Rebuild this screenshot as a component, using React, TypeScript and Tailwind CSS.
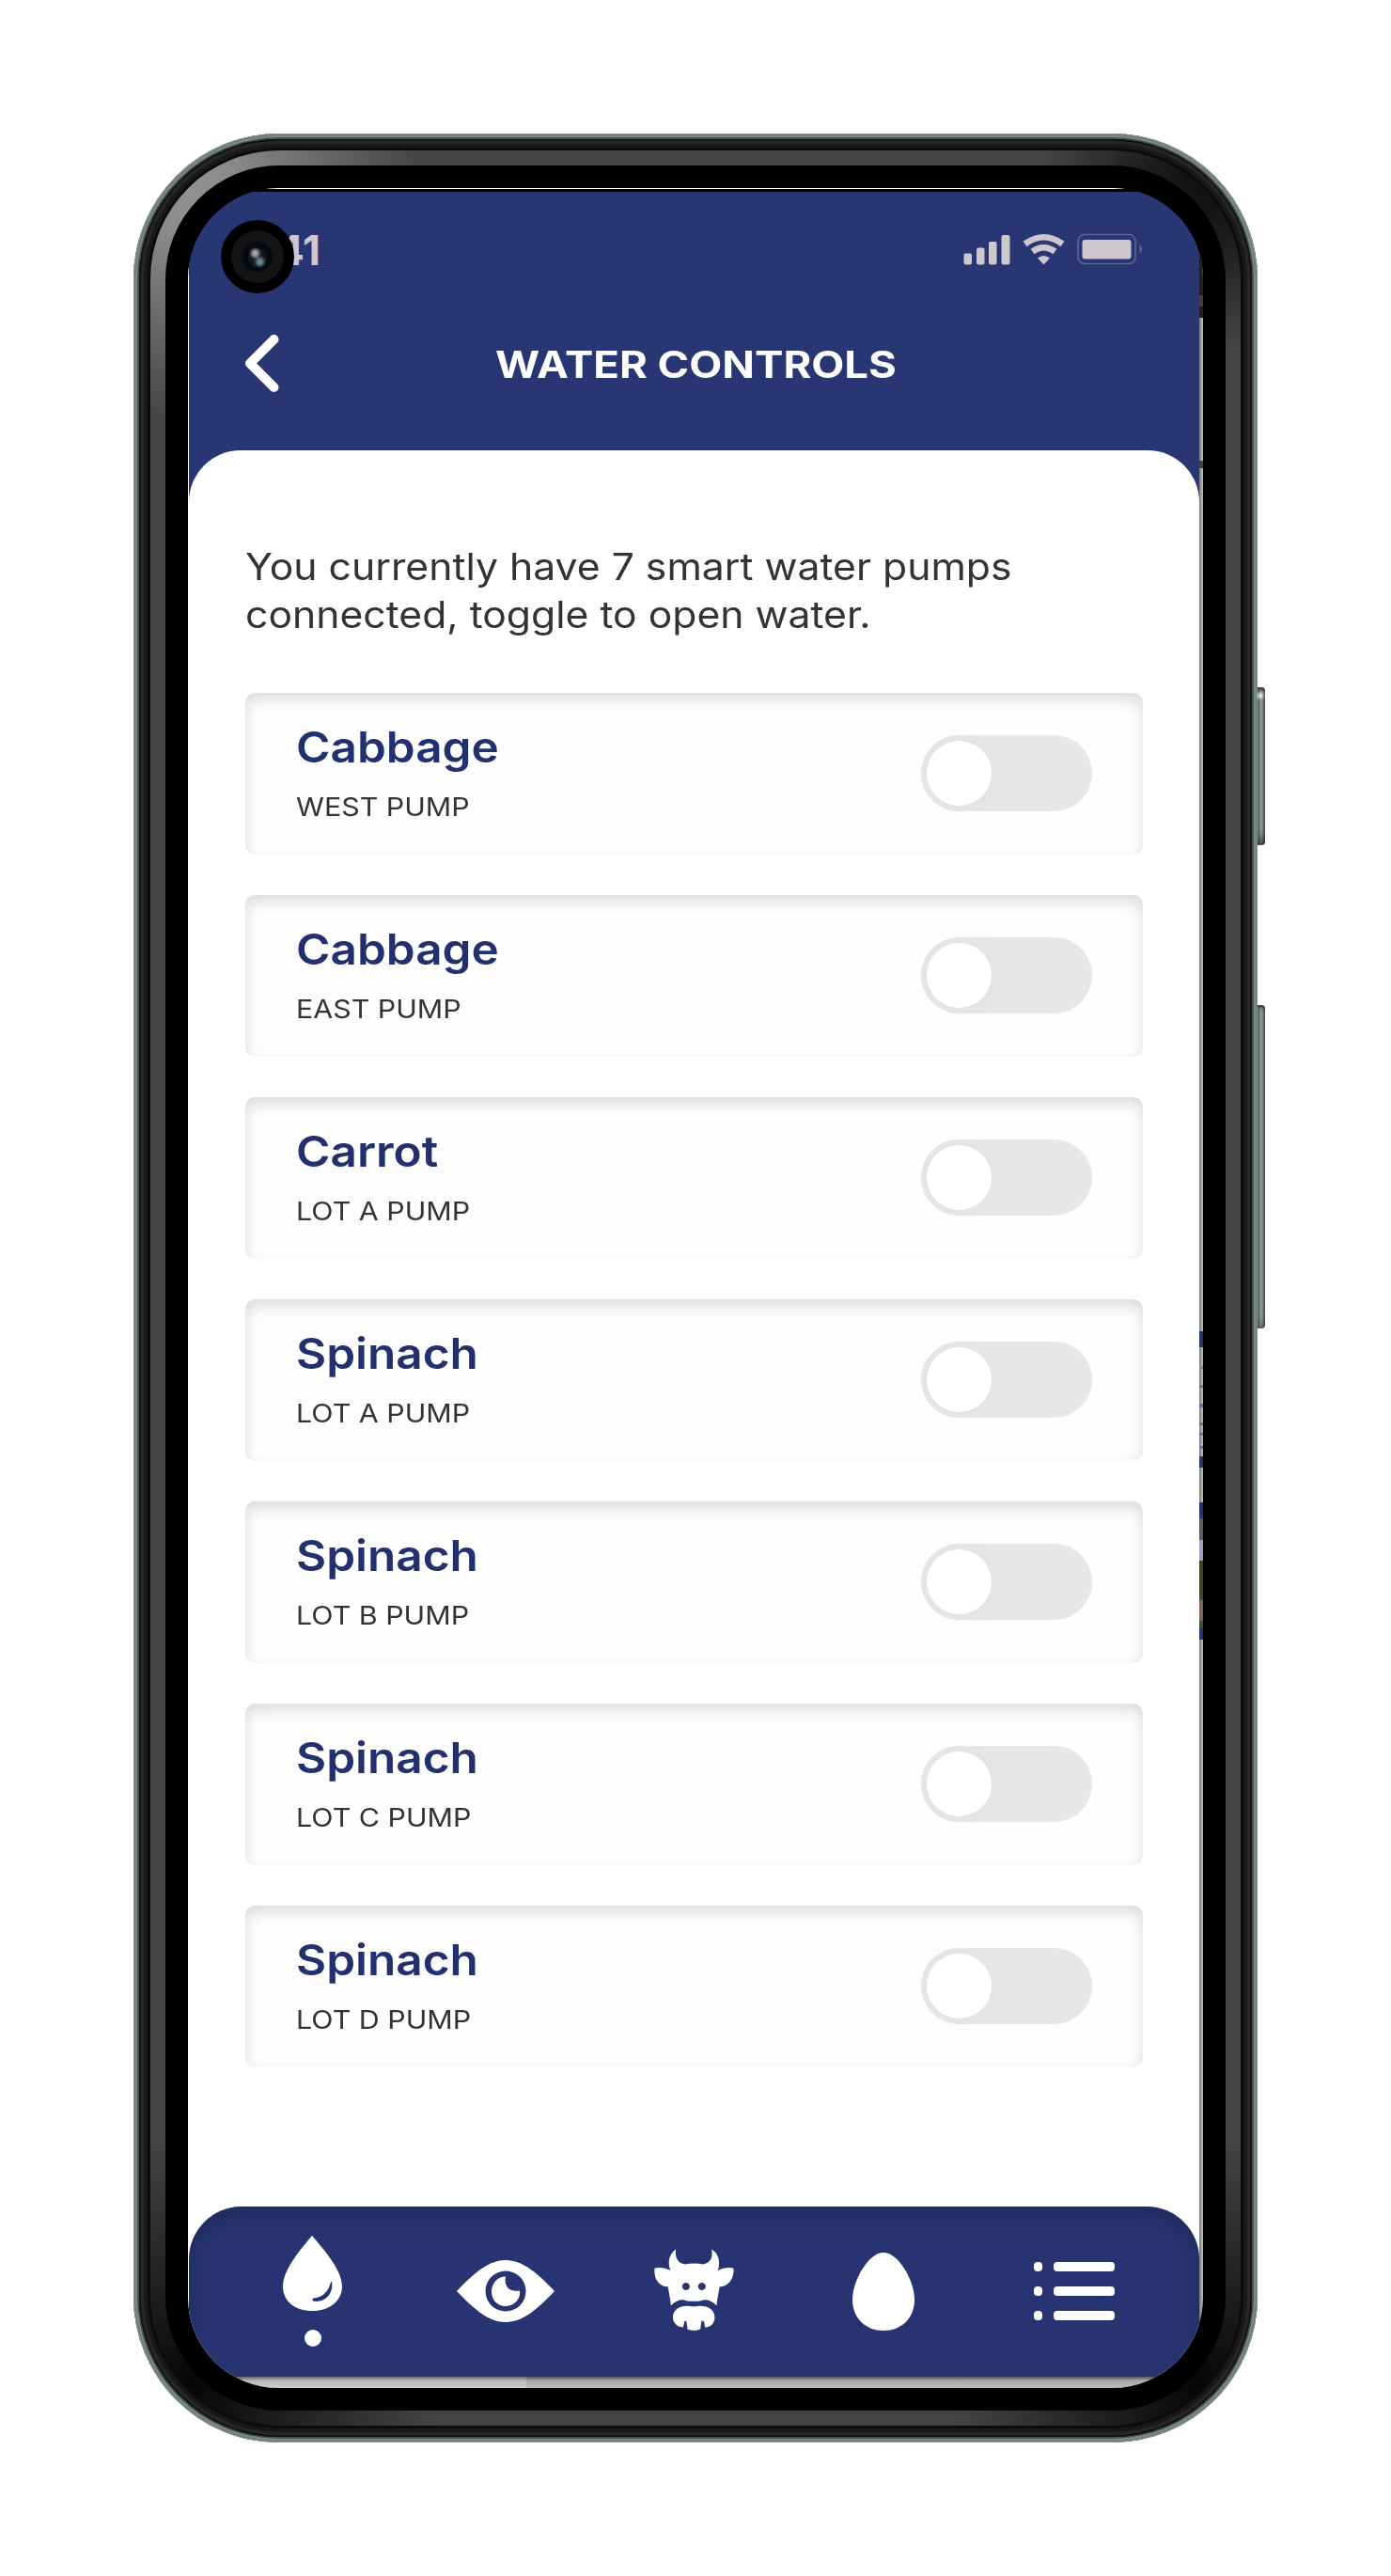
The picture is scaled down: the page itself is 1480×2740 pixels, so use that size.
import { useState } from "react";

const PUMPS = [
  { crop: "Cabbage", pump: "WEST PUMP" },
  { crop: "Cabbage", pump: "EAST PUMP" },
  { crop: "Carrot", pump: "LOT A PUMP" },
  { crop: "Spinach", pump: "LOT A PUMP" },
  { crop: "Spinach", pump: "LOT B PUMP" },
  { crop: "Spinach", pump: "LOT C PUMP" },
  { crop: "Spinach", pump: "LOT D PUMP" },
];

function StatusIcons() {
  return (
    <svg width="194" height="36" viewBox="0 0 194 36" fill="#cdc8d0" className="block">
      <rect x="0.5" y="22.5" width="8.5" height="12" rx="2" />
      <rect x="14" y="16.5" width="8.5" height="18" rx="2" />
      <rect x="27" y="10" width="8.500" height="24.500" rx="2" />
      <rect x="40.500" y="3" width="9" height="31.500" rx="2" />
      <g fill="none" stroke="#cdc8d0" strokeWidth="6.5">
        <path d="M65.500 12.500 Q85.500 -2 105.500 12.500" />
        <path d="M73.500 20.500 Q85.500 12 97.500 20.500" />
      </g>
      <path d="M79 27.500 Q85.500 22.500 92 27.500 L85.500 34.500 Z" />
      <rect x="122" y="2.500" width="61" height="31" rx="7" fill="none" stroke="#5f6695" strokeWidth="1.600" />
      <rect x="126.500" y="8" width="52" height="20.500" rx="3" />
      <path d="M187.500 13 Q190 15 190 18 Q190 21 187.500 23 Z" fill="#5f6695" />
    </svg>
  );
}

function Camera() {
  return (
    <div className="absolute left-[35px] top-[34px] flex size-[78px] items-center justify-center rounded-full bg-black">
      <div className="flex size-14 items-center justify-center rounded-full bg-[#131416]">
        <div className="relative size-8 rounded-full bg-[#08090c]">
          <div className="absolute left-[6px] top-[7px] size-5 rounded-full bg-[#14181d]" />
          <div className="absolute left-[9px] top-[8px] size-[9px] rounded-full bg-[#a2a8ae] blur-[1.5px]" />
          <div className="absolute left-[14px] top-[17px] size-[9px] rounded-full bg-[#6f8591] blur-[1.5px]" />
        </div>
      </div>
    </div>
  );
}

function Toggle({ on, onClick, label }: { on: boolean; onClick: () => void; label: string }) {
  return (
    <button
      type="button"
      role="switch"
      aria-checked={on}
      aria-label={label}
      onClick={onClick}
      className={`flex h-[81px] w-[182px] items-center rounded-full px-1.5 ${on ? "justify-end bg-[#273471]" : "bg-[#e7e7e7]"}`}
    >
      <span className="size-[69px] rounded-full bg-white shadow-[0_0_24px_4px_rgba(0,0,0,0.025)]" />
    </button>
  );
}

function PumpCard({ crop, pump }: { crop: string; pump: string }) {
  const [on, setOn] = useState(false);
  return (
    <div className="flex h-[172px] items-start justify-between rounded-[10px] bg-[#fefefe] pt-[31px] pr-[54px] pl-[54px] shadow-[inset_0_7px_16px_rgba(0,0,0,0.14)]">
      <div>
        <h2 className="origin-left scale-x-[1.1] text-[45px] leading-[54px] font-semibold text-[#22306f]">{crop}</h2>
        <p className="mt-[21px] origin-left scale-x-[1.125] text-[27px] leading-8 whitespace-nowrap text-[#333333]">{pump}</p>
      </div>
      <div className="mt-3.5">
        <Toggle on={on} onClick={() => setOn(!on)} label={`${crop} ${pump}`} />
      </div>
    </div>
  );
}

function CowIcon() {
  return (
    <svg width="85" height="88" viewBox="48 37 256 264" fill="#fff" className="block">
      <path
        fillRule="evenodd"
        d="M118 38 C96 52 90 80 100 106 C85 98 65 94 50 98 C45 125 60 157 92 158 C96 180 100 200 102 218 C118 203 132 198 146 201 C160 206 190 206 204 201 C218 198 232 203 248 218 C250 200 254 180 258 158 C290 157 306 125 302 98 C285 94 268 98 252 106 C261 80 256 52 232 38 C238 66 226 84 204 86 C186 82 166 82 148 86 C126 84 113 66 118 38 Z M150 145 a12 12 0 1 0 0.010 0 Z M201 145 a12 12 0 1 0 0.010 0 Z"
      />
      <path d="M108 255 C108 228 138 213 175 222 C212 213 242 228 242 255 C242 275 230 288 211 288 L208 269 L200 267 L196 294 C185 299 165 299 155 294 L151 267 L145 269 L141 288 C120 287 108 272 108 255 Z" />
    </svg>
  );
}

function NavBar() {
  return (
    <nav className="flex h-[181px] items-start rounded-t-[56px] bg-[#273471] pl-[100px] shadow-[inset_0_10px_24px_-4px_rgba(0,0,0,0.24)]">
      <div className="mt-[31px] flex flex-col items-center gap-5">
        <svg width="63" height="80" viewBox="0 0 63 80" fill="#fff" className="block">
          <path d="M31 0 C38 9 63 34 63 54 C63 70 49 80 31.500 80 C13 80 0 70 0 54 C0 34 24 9 31 0 Z" />
          <path d="M51 49 C49 59 42 66 32.500 66.500 C31 67 31 69.500 33 69.800 C46 71 54 61 52 49 Z" fill="#273471" />
        </svg>
        <div className="size-[18px] rounded-full bg-white" />
      </div>
      <svg width="104" height="66" viewBox="0 0 104 66" fill="#fff" className="mt-[57px] ml-[122px] block">
        <path d="M0 33 C18 14 34 0 52 0 C70 0 86 14 104 33 C86 52 70 66 52 66 C34 66 18 52 0 33 Z" />
        <ellipse cx="52" cy="33" rx="21.500" ry="21.500" fill="#273471" />
        <path d="M52 17.500 C50 28 56 34.500 67 32.500 C68.500 40 62 49 52 49 C43 49 37 42 37 33.500 C37 25 43 17.500 52 17.500 Z" />
      </svg>
      <div className="mt-[45px] ml-[106px]">
        <CowIcon />
      </div>
      <svg width="66" height="83" viewBox="0 0 66 83" fill="#fff" className="mt-[49px] ml-[126px] block">
        <path d="M33 0 C49 0 66 30 66 50 C66 70 52 83 33 83 C14 83 0 70 0 50 C0 30 17 0 33 0 Z" />
      </svg>
      <div className="mt-[59px] ml-[127px] flex flex-col gap-4">
        {[0, 1, 2].map((n) => (
          <div key={n} className="flex h-2.5 gap-3">
            <span className="w-[9px] rounded-[4px] bg-white" />
            <span className="w-[65px] rounded-[4px] bg-white" />
          </div>
        ))}
      </div>
    </nav>
  );
}

/* Sliver of the neighbouring screen that shows along the right edge. */
function EdgeSliver() {
  return (
    <div className="flex w-1 flex-col bg-linear-to-r from-[#777777] to-[#c4c4c4]">
      <div className="h-[110px] bg-[#1f1f1f]" />
      <div className="h-[12px] bg-[#4a3a35]" />
      <div className="h-[12px] bg-[#202020]" />
      <div className="mt-[152px] h-[8px] bg-[#444444]" />
      <div className="mt-[918px] h-[17px] bg-[#273471]" />
      <div className="mt-5 h-[3px] bg-[#8387ab]" />
      <div className="mt-[17px] h-[3px] bg-[#6a70a0]" />
      <div className="mt-[17px] h-[4px] bg-[#6a70a0]" />
      <div className="mt-[16px] h-[3px] bg-[#6a70a0]" />
      <div className="mt-[8px] h-[3px] bg-[#6a70a0]" />
      <div className="mt-[11px] h-[3px] bg-[#6a70a0]" />
      <div className="mt-[8px] h-[12px] bg-[#273471]" />
      <div className="mt-[37px] h-[17px] bg-[#273471]" />
      <div className="h-[23px] bg-[#5c5c5c]" />
      <div className="h-[22px] bg-[#9a9cc0]" />
      <div className="h-[42px] bg-[#3f4528]" />
      <div className="h-[22px] bg-[#7d6460]" />
      <div className="h-[8px] bg-[#3c5030]" />
      <div className="h-[12px] bg-[#273471]" />
    </div>
  );
}

function Screen() {
  return (
    <div className="flex w-[1075px] flex-col bg-[#283673]">
      <div className="flex h-[159px] items-start justify-between pt-10 pr-[57px] pl-[42px]">
        <span className="w-[98px] text-right text-[44px] leading-[44px] font-bold text-[#cdc8d0]">9:41</span>
        <div className="mt-[3px]">
          <StatusIcons />
        </div>
      </div>
      <div className="flex h-[116px] items-start pl-[59px]">
        <svg width="38" height="64" viewBox="0 0 38 64" fill="none" className="-mt-2 block">
          <path d="M31.500 6 L6 31.500 L31.500 57" stroke="#fff" strokeWidth="10" strokeLinecap="round" strokeLinejoin="round" />
        </svg>
        <h1 className="mt-px ml-[229px] origin-left scale-x-[1.167] text-[39px] leading-[48px] font-bold whitespace-nowrap text-white">
          WATER CONTROLS
        </h1>
      </div>
      <div className="flex flex-1 flex-col justify-between rounded-t-[55px] bg-white">
        <div className="px-[60px] pt-[98px]">
          <p className="origin-left scale-x-[1.095] text-[39px] leading-[51px] whitespace-nowrap text-[#333333]">
            You currently have 7 smart water pumps
            <br />
            connected, toggle to open water.
          </p>
          <div className="mt-[58px] flex flex-col gap-[43px]">
            {PUMPS.map((p, i) => (
              <PumpCard key={i} crop={p.crop} pump={p.pump} />
            ))}
          </div>
        </div>
        <NavBar />
      </div>
    </div>
  );
}

export default function App() {
  return (
    <div className="flex h-[2740px] w-[1480px] items-start overflow-hidden bg-white pt-[142px] pl-[142px] font-[Inter,sans-serif]">
      <div className="relative rounded-[155px] bg-[#46524c] p-1.5 shadow-[inset_0_0_0_1px_#8b9a92,inset_0_0_0_2px_#65746c,inset_0_0_0_4px_#7b8c83]">
        <div className="absolute top-[589px] -right-2 h-[168px] w-2 rounded-r-[4px] bg-linear-to-r from-[#5f6e66] via-[#98a69e] to-[#4d5a53] shadow-[inset_0_-12px_12px_-6px_rgba(20,28,24,0.7),inset_0_3px_3px_#3d4843]">
          <div className="mt-1.5 h-1.5 w-1.5 rounded-full bg-[#e8eeea] blur-[1.5px]" />
        </div>
        <div className="absolute top-[927px] -right-2 h-[344px] w-2 rounded-r-[4px] bg-linear-to-r from-[#5f6e66] via-[#98a69e] to-[#4d5a53] shadow-[inset_0_-10px_12px_-6px_rgba(20,28,24,0.5),inset_0_3px_3px_#3d4843]" />
        <div className="rounded-[149px] bg-[#0c0c0c] p-3 shadow-[inset_0_0_0_1.5px_#0e1213,inset_0_0_0_5px_#262626,inset_0_0_0_9px_#191919]">
          <div className="rounded-[137px] bg-[#444444] bg-[radial-gradient(circle_at_40px_40px,#929292_0,#8a8a8a_50px,transparent_250px),radial-gradient(circle_at_1120px_40px,#101010_0,#1c1c1c_60px,transparent_170px),radial-gradient(circle_at_45px_2375px,#060606_0,#121212_50px,transparent_260px),radial-gradient(circle_at_1115px_2375px,#060606_0,#121212_50px,transparent_260px)] p-4">
            <div className="rounded-[121px] bg-black p-6">
              <div className="relative flex h-[2340px] w-[1080px] flex-col overflow-hidden rounded-[96px] bg-black">
                <div className="h-px bg-white" />
                <div className="h-[3px] bg-black" />
                <div className="flex flex-1 border-l border-white">
                  <Screen />
                  <EdgeSliver />
                </div>
                <div className="flex h-3">
                  <div className="w-[360px] bg-linear-to-b from-[#666666] via-[#b8b8b8] via-35% to-[#cfcfcf]" />
                  <div className="flex-1 bg-linear-to-b from-[#555555] via-[#a8a8a8] via-35% to-[#bcbcbc]" />
                </div>
                <Camera />
              </div>
            </div>
          </div>
        </div>
      </div>
    </div>
  );
}
